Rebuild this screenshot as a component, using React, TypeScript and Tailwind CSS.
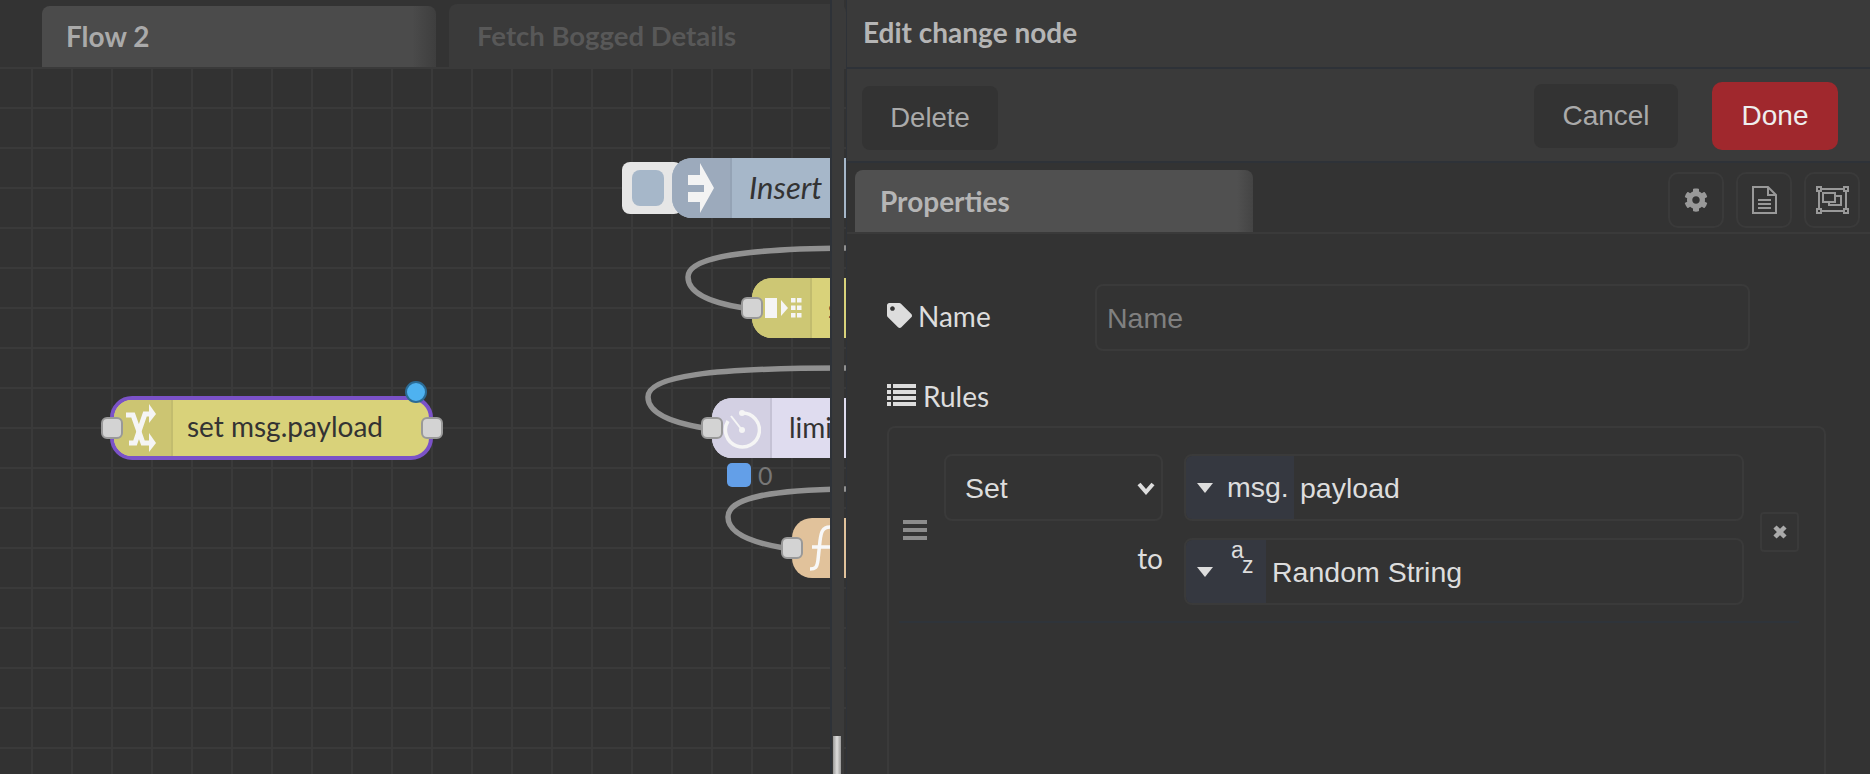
import type { ReactNode } from "react";
import { FaCog, FaTag } from "react-icons/fa";

const lato = "font-['Lato',sans-serif]";
const arial = "font-['Liberation_Sans',sans-serif]";

function Port({ className }: { className: string }) {
  return (
    <div
      className={`absolute h-[22px] w-[22px] rounded-[6px] border-2 border-[#999999] bg-[#d3d3d3] ${className}`}
    />
  );
}

function Caret() {
  return (
    <svg width="16" height="10" viewBox="0 0 16 10" className="shrink-0">
      <polygon points="0,0 16,0 8,10" fill="#dddddd" />
    </svg>
  );
}

function TypedInput({
  prefix,
  prefixClass,
  value,
}: {
  prefix: ReactNode;
  prefixClass: string;
  value: string;
}) {
  return (
    <div className="flex h-[67px] w-full overflow-hidden rounded-[8px] border-2 border-[#3a3a3a]">
      <div className={`flex items-center bg-[#353840] pl-[11px] ${prefixClass}`}>
        <Caret />
        {prefix}
      </div>
      <div className={`${arial} flex items-center pl-[6px] pt-[2px] text-[28.5px] text-[#dddddd]`}>{value}</div>
    </div>
  );
}

function ToolButton({ children }: { children: ReactNode }) {
  return (
    <div className="flex h-[56px] w-[56px] items-center justify-center rounded-[10px] border-2 border-[#3a3a3a]">
      {children}
    </div>
  );
}

function Wires() {
  return (
    <svg className="absolute left-0 top-0" width="846" height="774" fill="none" stroke="#919191" strokeWidth="5.5">
      <path d="M744 308 C706 302 688 292 688 277 C688 256 750 249 846 248" />
      <path d="M704 428 C668 422 648 412 648 397 C648 376 710 368 846 368" />
      <path d="M784 548 C748 542 728 532 728 517 C728 498 770 490 846 489" />
    </svg>
  );
}

function SwapIcon() {
  return (
    <svg width="30" height="48" viewBox="0 0 30 48" fill="none" stroke="#f5f5f5" strokeWidth="5">
      <path d="M0 11 H7 L17 39 H24" />
      <path d="M3 39 H9 L19 10 H24" />
      <polygon points="23,0 30,10 23,19" fill="#f5f5f5" stroke="none" />
      <polygon points="23,29 30,39 23,48" fill="#f5f5f5" stroke="none" />
    </svg>
  );
}

function LinkIcon() {
  return (
    <svg width="28" height="50" viewBox="0 0 28 50" fill="#f3f3f3">
      <rect x="0" y="12" width="16" height="10" />
      <rect x="0" y="29" width="16" height="10" />
      <polygon points="12,0 26,25 12,50 12,39 16,39 16,29 16,22 16,12 12,12" />
    </svg>
  );
}

function SplitIcon() {
  return (
    <svg width="37" height="20" viewBox="0 0 37 20" fill="#f5f5f5">
      <rect x="0" y="0" width="12" height="20" />
      <polygon points="16,2 23,10 16,18" />
      <rect x="26" y="0" width="4.5" height="4.5" />
      <rect x="32" y="0" width="4.5" height="4.5" />
      <rect x="26" y="7.5" width="4.5" height="4.5" />
      <rect x="32" y="7.5" width="4.5" height="4.5" />
      <rect x="26" y="15" width="4.5" height="4.5" />
      <rect x="32" y="15" width="4.5" height="4.5" />
    </svg>
  );
}

function TimerIcon() {
  return (
    <svg width="38" height="40" viewBox="0 0 38 40" fill="none" stroke="#f5f5f5" strokeWidth="3.5">
      <path d="M19 4 A17 17 0 1 1 5 12" />
      <circle cx="19" cy="4" r="3" fill="#f5f5f5" stroke="none" />
      <path d="M19 21 L8 7" strokeWidth="2" />
      <circle cx="19" cy="21" r="3" fill="#f5f5f5" stroke="none" />
    </svg>
  );
}

function FunctionIcon() {
  return (
    <svg width="24" height="46" viewBox="0 0 24 46" fill="none" stroke="#f8f8f8" strokeWidth="3.5">
      <path d="M21 2 C13 2 12 8 11 16 L9 35 C8 43 6 44 1 44" />
      <path d="M3 22 H21" />
    </svg>
  );
}

function ListIcon() {
  return (
    <svg width="29" height="22" viewBox="0 0 29 22" fill="#dddddd">
      <rect x="0" y="0" width="4" height="4" />
      <rect x="6" y="0" width="23" height="4" />
      <rect x="0" y="6" width="4" height="4" />
      <rect x="6" y="6" width="23" height="4" />
      <rect x="0" y="12" width="4" height="4" />
      <rect x="6" y="12" width="23" height="4" />
      <rect x="0" y="18" width="4" height="4" />
      <rect x="6" y="18" width="23" height="4" />
    </svg>
  );
}

function DocIcon() {
  return (
    <svg width="25" height="28" viewBox="0 0 25 28" fill="none" stroke="#999999" strokeWidth="2">
      <path d="M1 1 H16 L24 9 V27 H1 Z" />
      <path d="M16 1 V9 H24" />
      <path d="M6 14 H19 M6 18 H19 M6 22 H19" />
    </svg>
  );
}

function FrameIcon() {
  return (
    <svg width="33" height="28" viewBox="0 0 33 28" fill="none" stroke="#999999" strokeWidth="2">
      <rect x="3" y="3" width="27" height="22" />
      <rect x="1" y="1" width="4" height="4" fill="#333333" />
      <rect x="28" y="1" width="4" height="4" fill="#333333" />
      <rect x="1" y="23" width="4" height="4" fill="#333333" />
      <rect x="28" y="23" width="4" height="4" fill="#333333" />
      <rect x="7" y="7" width="12" height="9" />
      <path d="M19 10 H25 V19 H13 V16" />
    </svg>
  );
}

export default function App() {
  return (
    <div className={`${lato} flex h-[774px] w-[1870px] overflow-hidden bg-[#333333]`}>
      {/* workspace */}
      <div className="relative flex h-full w-[846px] shrink-0 flex-col overflow-hidden">
        <div className="flex h-[67px] shrink-0 items-end gap-[13px] bg-[#333333] pl-[42px]">
          <div className="flex h-[61px] w-[397px] items-center rounded-t-[8px] bg-[linear-gradient(90deg,#4b4b4b_94%,#3e3e3e)] pb-[2px] pl-[24px] text-[28px] font-bold text-[#aaaaaa]">
            Flow 2
          </div>
          <div className="flex h-[63px] w-[400px] items-center rounded-t-[8px] bg-[#3a3a3a] pl-[28px] text-[27.5px] font-bold text-[#585858]">
            Fetch Bogged Details
          </div>
        </div>
        <div className="flex-1 bg-[#323232] bg-[linear-gradient(#3a3a3a_2px,transparent_2px),linear-gradient(90deg,#3a3a3a_2px,transparent_2px)] bg-[size:40px_40px] bg-[position:31px_0px]" />

        <Wires />

        {/* inject */}
        <div className="absolute left-[622px] top-[162px] h-[52px] w-[60px] rounded-[8px] bg-[#e6e6e6] pl-[10px] pt-[8px]">
          <div className="h-[36px] w-[32px] rounded-[8px] bg-[#a6b7c9]" />
        </div>
        <div className="absolute left-[672px] top-[158px] flex h-[60px] w-[240px] overflow-hidden rounded-[20px] bg-[#a6b7c9] text-[#333333]">
          <div className="flex w-[60px] shrink-0 items-center justify-center border-r-2 border-[#94a3b5] bg-[#9caabc] pl-[2px]">
            <LinkIcon />
          </div>
          <div className="flex items-center pb-[2px] pl-[17px] text-[31px] italic">Insert</div>
        </div>

        {/* split */}
        <div className="absolute left-[752px] top-[278px] flex h-[60px] w-[160px] overflow-hidden rounded-[20px] bg-[#d9d27a] text-[#333333]">
          <div className="flex w-[60px] shrink-0 items-center justify-end border-r-2 border-[#c2bc6e] bg-[#cdc774] pr-[8px]">
            <SplitIcon />
          </div>
          <div className="flex items-center pl-[16px] text-[28px]">s</div>
        </div>
        <Port className="left-[741px] top-[297px]" />

        {/* delay */}
        <div className="absolute left-[712px] top-[398px] flex h-[60px] w-[200px] overflow-hidden rounded-[20px] bg-[#dfdcef] text-[#333333]">
          <div className="flex w-[60px] shrink-0 items-center justify-center border-r-2 border-[#c5c2d5] bg-[#d3d0e3] pl-[2px] pt-[2px]">
            <TimerIcon />
          </div>
          <div className="flex items-center pb-[2px] pl-[17px] text-[28px]">limit</div>
        </div>
        <Port className="left-[701px] top-[417px]" />
        <div className="absolute left-[727px] top-[463px] h-[24px] w-[24px] rounded-[5px] bg-[#639fe8]" />
        <div className="absolute left-[758px] top-[457px] text-[25px] text-[#777777]">0</div>

        {/* function */}
        <div className="absolute left-[792px] top-[518px] flex h-[60px] w-[120px] overflow-hidden rounded-[20px] bg-[#e1c29b]">
          <div className="flex w-[60px] shrink-0 items-center pl-[17px]">
            <FunctionIcon />
          </div>
        </div>
        <Port className="left-[781px] top-[537px]" />

        {/* selected node */}
        <div className="absolute left-[110px] top-[396px] flex h-[64px] w-[323px] overflow-hidden rounded-[22px] border-4 border-[#7b52c8] bg-[#d9d27a] text-[#333333]">
          <div className="flex w-[59px] shrink-0 items-center justify-center border-r-2 border-[#c2bc6e] bg-[#ccc572] pr-[3px]">
            <SwapIcon />
          </div>
          <div className="flex items-center pb-[4px] pl-[14px] text-[28px]">set msg.payload</div>
        </div>
        <Port className="left-[101px] top-[417px]" />
        <Port className="left-[421px] top-[417px]" />
        <div className="absolute left-[405px] top-[381px] h-[22px] w-[22px] rounded-full border-2 border-[#2b6b95] bg-[#4eb2f0]" />

        {/* sash */}
        <div className="absolute bottom-0 left-[830px] top-0 w-[14px] border-l-2 border-[#2e3238] bg-[#3a3a3a]">
          <div className="absolute bottom-0 left-[1px] h-[38px] w-[8px] bg-[linear-gradient(90deg,#999999,#dddddd,#999999)]" />
        </div>
      </div>

      {/* edit tray */}
      <div className="flex h-full min-w-0 flex-1 flex-col border-l border-[#2e3238]">
        <div className="flex h-[69px] shrink-0 items-center border-b-2 border-[#2e3238] bg-[#3a3a3a] pb-[4px] pl-[16px] text-[28px] font-bold text-[#b5b5b5]">
          Edit change node
        </div>
        <div className="flex h-[94px] shrink-0 items-center border-b-2 border-[#2e3238] bg-[#3a3a3a] pl-[15px] pr-[32px] text-[#aaaaaa]">
          <div className={`${arial} mt-[6px] flex h-[64px] w-[136px] items-center justify-center rounded-[8px] bg-[#333333] text-[27.5px]`}>
            Delete
          </div>
          <div className={`${arial} ml-auto mt-[2px] flex h-[64px] w-[144px] items-center justify-center rounded-[8px] bg-[#333333] text-[28px]`}>
            Cancel
          </div>
          <div className={`${arial} ml-[34px] mt-[2px] flex h-[68px] w-[126px] items-center justify-center rounded-[10px] bg-[#a0282d] text-[28px] text-[#eeeeee]`}>
            Done
          </div>
        </div>
        <div className="flex h-[71px] shrink-0 items-end border-b-2 border-[#3a3a3a] bg-[#333333] pl-[8px] pr-[10px]">
          <div className="flex h-[62px] w-[398px] items-center rounded-t-[8px] bg-[linear-gradient(90deg,#505050_96%,#444444)] pl-[25px] text-[28px] font-bold text-[#b5b5b5]">
            Properties
          </div>
          <div className="mb-[4px] ml-auto flex gap-[12px]">
            <ToolButton>
              <FaCog size={24} color="#999999" />
            </ToolButton>
            <ToolButton>
              <DocIcon />
            </ToolButton>
            <ToolButton>
              <FrameIcon />
            </ToolButton>
          </div>
        </div>

        <div className="flex min-h-0 flex-1 flex-col pl-[40px] pr-[44px] pt-[50px]">
          <div className="flex h-[67px] items-center text-[28px] text-[#dddddd]">
            <div className="flex w-[208px] items-center gap-[6px]">
              <FaTag size={25} color="#dddddd" className="-mt-[4px]" />
              <span className="-mt-[4px]">Name</span>
            </div>
            <div className={`${arial} flex h-[67px] w-[655px] items-center rounded-[8px] border-2 border-[#3a3a3a] pl-[10px] pt-[2px] text-[28.5px] text-[#808080]`}>
              Name
            </div>
          </div>
          <div className="mt-[28px] flex h-[32px] items-center gap-[7px] text-[28px] text-[#dddddd]">
            <ListIcon />
            <span className="pt-[1px]">Rules</span>
          </div>
          <div className="mt-[15px] flex-1 rounded-t-[8px] border-x-2 border-t-2 border-[#3a3a3a] pl-[10px] pt-[26px]">
            <div className="flex w-[900px] items-center border-b-2 border-[#2f343a] pb-[16px] pl-[4px]">
              <div className="flex w-[24px] shrink-0 flex-col gap-[4px]">
                <div className="h-[4px] bg-[#8c8c8c]" />
                <div className="h-[4px] bg-[#8c8c8c]" />
                <div className="h-[4px] bg-[#8c8c8c]" />
              </div>
              <div className="ml-[17px] grid grid-cols-[219px_560px] gap-x-[21px] gap-y-[17px]">
                <div className={`${arial} flex h-[67px] items-center justify-between rounded-[8px] border-2 border-[#3a3a3a] pl-[19px] pr-[6px] pt-[2px] text-[28.5px] text-[#dddddd]`}>
                  Set
                  <svg width="18" height="13" viewBox="0 0 18 13" fill="none" stroke="#dddddd" strokeWidth="4">
                    <path d="M2 2 L9 10 L16 2" />
                  </svg>
                </div>
                <TypedInput
                  prefixClass="w-[108px]"
                  value="payload"
                  prefix={<span className={`${arial} ml-[14px] text-[28.5px] text-[#dddddd]`}>msg.</span>}
                />
                <div className="flex h-[67px] items-center justify-end pb-[28px] text-[28px] text-[#dddddd]">to</div>
                <TypedInput
                  prefixClass="w-[80px]"
                  value="Random String"
                  prefix={
                    <span className={`${arial} relative ml-[18px] h-[67px] w-[24px] text-[23px] leading-none text-[#dddddd]`}>
                      <span className="absolute left-0 top-[1px]">a</span>
                      <span className="absolute left-[11px] top-[16px]">z</span>
                    </span>
                  }
                />
              </div>
              <div className="ml-[16px] mt-[5px] flex h-[40px] w-[40px] items-center justify-center rounded-[4px] border-2 border-[#3a3a3a]">
                <svg width="14" height="14" viewBox="0 0 14 14" fill="none" stroke="#aaaaaa" strokeWidth="4.5">
                  <path d="M2 2 L12 12 M12 2 L2 12" />
                </svg>
              </div>
            </div>
          </div>
        </div>
      </div>
    </div>
  );
}
